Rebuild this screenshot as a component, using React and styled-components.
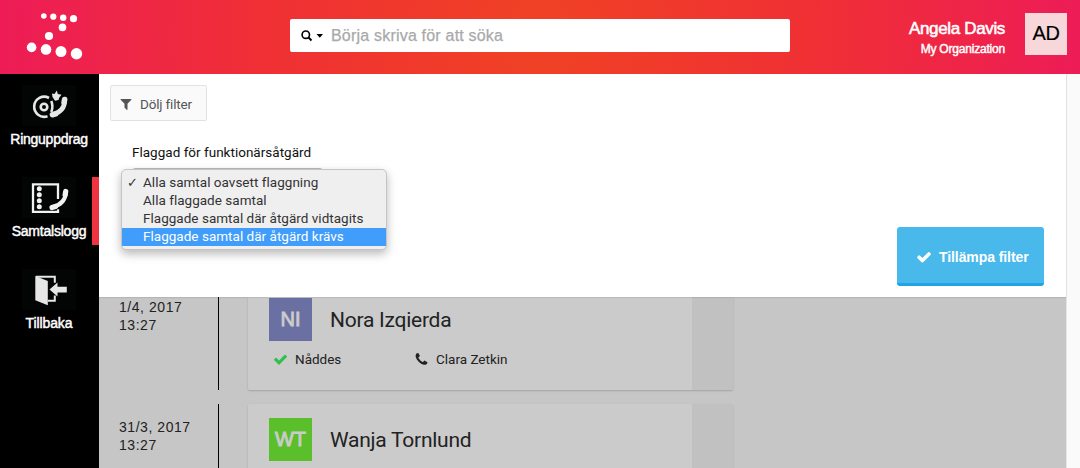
import React from "react";
import styled, { createGlobalStyle } from "styled-components";

const Global = createGlobalStyle`
  * { box-sizing: border-box; }
  body { margin: 0; overflow: hidden; background: #fafafa; font-family: "Liberation Sans", Arial, sans-serif; }
`;

const Page = styled.div`
  width: 1080px; height: 468px; overflow: hidden;
  display: flex; flex-direction: column;
`;
const Header = styled.header`
  flex: 0 0 74px; height: 74px; display: flex; align-items: flex-start;
  background: radial-gradient(circle at 540px 37px, #f04224 0, #f03034 270px, #ed1c57 540px);
`;
const LogoSlot = styled.div`width: 290px; padding: 10px 0 0 24px;`;
const Search = styled.div`
  width: 500px; height: 33px; margin-top: 19px; padding-left: 11px;
  display: flex; align-items: center; background: #fff; border-radius: 2px;
`;
const Placeholder = styled.span`
  margin-left: 8px; font-size: 16px; line-height: 32px; color: #a9a9a9; white-space: nowrap;
  letter-spacing: 0.2px; -webkit-text-stroke: 0.25px #a9a9a9;
`;
const User = styled.div`
  flex: 1; display: flex; justify-content: flex-end; padding: 13px 13px 0 0;
`;
const UserText = styled.div`
  display: flex; flex-direction: column; align-items: flex-end; margin-right: 20px; padding-top: 5px; color: #fff;
`;
const UserName = styled.div`font-size: 17px; line-height: 22px; letter-spacing: -0.35px; -webkit-text-stroke: 0.55px #fff;`;
const Org = styled.div`font-size: 12px; line-height: 18px; letter-spacing: -0.2px; -webkit-text-stroke: 0.45px #fff;`;
const UserBadge = styled.div`
  width: 42px; height: 42px; background: #f8d7da; color: #000; font-size: 20px; line-height: 41px; text-align: center;
  letter-spacing: -0.5px; -webkit-text-stroke: 0.15px #000;
`;
const Body = styled.div`flex: 1; display: flex; min-height: 0;`;
const Sidebar = styled.nav`width: 99px; background: #000; display: flex; flex-direction: column; padding-top: 11px;`;
const NavItem = styled.a`
  height: 68px; margin-bottom: 24px;
  display: flex; flex-direction: column; align-items: center; color: #fff;
  padding-right: ${(p) => (p.$active ? 0 : 1)}px;
  border-right: ${(p) => (p.$active ? "7px solid #ef3340" : "0")};
  padding-left: ${(p) => (p.$active ? 6 : 0)}px;
`;
const NavIcon = styled.svg`width: 54px; height: 41px; flex: none; background: #030505; display: block;`;
const NavLabel = styled.span`
  margin-top: 4px; font-size: 14px; line-height: 18px; white-space: nowrap;
  letter-spacing: ${(p) => p.$ls || 0}px; -webkit-text-stroke: 0.45px #fff;
`;
const Content = styled.main`width: 967px; display: flex; flex-direction: column; background: #c6c6c6;`;
const Gutter = styled.div`width: 14px; background: #fafafa; border-left: 1px solid #e5e5e5;`;
const FilterPanel = styled.section`
  flex: 0 0 223px; height: 223px; background: #fff; padding: 11px 22px 11px 11px;
  display: flex; flex-direction: column; align-items: flex-start; position: relative; z-index: 1;
  box-shadow: 0 1px 1px rgba(0,0,0,.08);
`;
const Glyph = styled.svg`flex: none; display: block; fill: currentColor;`;
const HideButton = styled.button`
  width: 97px; height: 36px; padding: 1px 0 0 8px; display: flex; align-items: center; gap: 7px;
  border: 1px solid #e2e2e2; border-radius: 2px; background: #fafafa; color: #555;
  font: 13.5px/34px Roboto, sans-serif; letter-spacing: -0.18px; white-space: nowrap;
`;
const Field = styled.div`
  position: relative; margin: 21px 0 0 22px; font: 13.5px/20px Roboto, sans-serif; color: #111;
`;
const FieldLabel = styled.div`letter-spacing: 0.01px; white-space: nowrap;`;
const Select = styled.div`width: 191px; height: 22px; margin-top: 6px; border: 1px solid #bbb; border-radius: 3px;`;
const Menu = styled.ul`
  position: absolute; left: -11px; top: 27px; width: 266px; height: 81px; margin: 0; padding: 4px 0 0;
  list-style: none; background: #efefef; border: 1px solid #c4c4c4; border-radius: 5px;
  box-shadow: 0 4px 10px rgba(0,0,0,.28);
`;
const Option = styled.li`
  height: 18px; line-height: 16px; display: flex; font-size: 13.5px; white-space: nowrap;
  color: ${(p) => (p.$selected ? "#fff" : "#333")};
  background: ${(p) => (p.$selected ? "#409dfc" : "transparent")};
  letter-spacing: 0.02px;
`;
const Tick = styled.span`width: 21px; padding-left: 5px; font: bold 13px/17px "DejaVu Sans", sans-serif; letter-spacing: 0;`;
const Apply = styled.button`
  width: 147px; height: 59px; margin: auto 0 0 auto; padding: 3px 0 0 19px; display: flex; align-items: center; gap: 7px;
  border: 0; border-bottom: 3px solid #1fa5e6; border-radius: 3px; background: #49b9ec; color: #fff;
  font: bold 14px "Liberation Sans", Arial, sans-serif; letter-spacing: -0.08px; white-space: nowrap;
`;
const Log = styled.section`flex: 1; min-height: 0; overflow: hidden; display: flex; flex-direction: column; gap: 14px;`;
const Entry = styled.article`flex: none; height: ${(p) => p.$h}px; display: flex;`;
const Time = styled.time`
  width: 120px; padding: ${(p) => p.$top}px 0 0 20px; border-right: 1px solid #000;
  font-size: 14px; line-height: 18px; letter-spacing: 0.55px; color: #222; white-space: nowrap;
`;
const Card = styled.div`
  width: 485px; margin-left: 29px; padding: ${(p) => p.$top}px 0 0 21px;
  background: linear-gradient(to right, #cbcbcb 444px, #c1c1c1 444px);
  border-radius: ${(p) => (p.$cut ? "0 0 2px 2px" : "2px")};
  box-shadow: 0 1px 2px rgba(0,0,0,.18);
`;
const Person = styled.div`display: flex; align-items: center;`;
const Initials = styled.div`
  width: 43px; height: 43px; margin-right: 18px; background: ${(p) => p.$bg};
  color: #cbcbcb; font-size: 20px; line-height: 42px; text-align: center; -webkit-text-stroke: 0.9px #cbcbcb;
`;
const PersonName = styled.div`
  font: 21px/26px Roboto, sans-serif; color: #222; letter-spacing: -0.25px; padding-top: 1px;
`;
const Meta = styled.div`
  display: flex; margin-top: 8px; padding-left: 4px; font: 13.5px/20px Roboto, sans-serif; color: #222;
`;
const MetaItem = styled.div`display: flex; align-items: center; gap: 7px; width: ${(p) => p.$w || "auto"}; white-space: nowrap;`;
const Green = styled.span`color: #2fc14b;`;

const dots = [
  [19.8, 6, 2.8], [29.3, 6.7, 3.1], [39.2, 7.8, 3.2], [49.5, 8.7, 3.6],
  [38.5, 17.4, 3.8], [25, 26, 4.1], [7.6, 37.4, 4.8], [22, 39.4, 5.3], [37, 41.6, 5.5], [52.5, 43.7, 5.7],
];

const Logo = () => (
  <svg width="60" height="52" viewBox="0 0 60 52" fill="#fff">
    {dots.map(([x, y, r]) => <circle key={x} cx={x} cy={y} r={r} />)}
  </svg>
);

const Check = ({ size }) => (
  <Glyph width={size} height={size} viewBox="0 0 1792 1792">
    <path d="M1671 566q0 40-28 68l-724 724-136 136q-28 28-68 28t-68-28l-136-136-362-362q-28-28-28-68t28-68l136-136q28-28 68-28t68 28l294 295 656-657q28-28 68-28t68 28l136 136q28 28 28 68z" />
  </Glyph>
);
const Funnel = ({ size }) => (
  <Glyph width={size} height={size} viewBox="0 0 1792 1792">
    <path d="M1595 295q17 41-14 70l-493 493v742q0 42-39 59-13 5-25 5-27 0-45-19l-256-256q-19-19-19-45v-486l-493-493q-31-29-14-70 17-39 59-39h1280q42 0 59 39z" />
  </Glyph>
);
const Phone = ({ size }) => (
  <Glyph width={size} height={size} viewBox="0 0 1792 1792">
    <path d="M1600 1240q0 27-10 70.5t-21 68.5q-21 50-122 106-94 51-186 51-27 0-53-3.5t-57.5-12.5-47-14.5-55.5-20.5-49-18q-98-35-175-83-127-79-264-216t-216-264q-48-77-83-175-3-9-18-49t-20.5-55.5-14.5-47-12.5-57.5-3.5-53q0-92 51-186 56-101 106-122 25-11 68.5-21t70.5-10q14 0 21 3 18 6 53 76 11 19 30 54t35 63.5 31 53.500q3 4 17.500 25t21.500 35.500 7 28.500q0 20-28.500 50t-62 55-62 53-28.500 46q0 9 5 22.500t8.500 20.500 14 24 11.500 19q76 137 174 235t235 174q2 1 19 11.500t24 14 20.500 8.500 22.500 5q18 0 46-28.500t53-62 55-62 50-28.500q14 0 28.500 7t35.500 21.500 25 17.500q25 15 53.500 31t63.500 35 54 30q70 35 76 53 3 7 3 21z" />
  </Glyph>
);

const RingIcon = () => (
  <NavIcon viewBox="0 0 54 41" fill="none" stroke="#e6e6e6" strokeLinecap="round">
    <path d="M25.500 31.200A10 10 0 1 1 27 13" strokeWidth="2.600" strokeLinecap="butt" />
    <circle cx="22" cy="22" r="3.300" strokeWidth="2.600" />
    <path d="M29.300 16q2.200 5.500 0 11" strokeWidth="2.600" strokeLinecap="butt" />
    <path d="M42.700 15.500q-.2 10.500-11.500 14" strokeWidth="4.800" />
    <path d="M42.600 14.500l-.5 3M30.500 29.700l3-.8" strokeWidth="5.600" />
    <path d="M30.500 12l-.5-3.500 2.500.5 2.300-3.500 1 3.500 3.700.7-2.300 3-.7 2.300-3.500.8z" fill="#e6e6e6" stroke="none" />
  </NavIcon>
);
const LogIcon = () => (
  <NavIcon viewBox="0 0 54 41" fill="#f2f2f2">
    <path d="M36 22V7.300H11v27.500h25v-2.500" fill="none" stroke="#f2f2f2" strokeWidth="2.300" />
    {[11.700, 17.700, 23.700, 29.700].map((y) => <circle key={y} cx="17.300" cy={y} r="2.500" />)}
    <path d="M44 15q-.8 12-13.500 15.200" fill="none" stroke="#030505" strokeWidth="7" />
    <path d="M44 15q-.8 12-13.500 15.200" fill="none" stroke="#f2f2f2" strokeWidth="4" strokeLinecap="round" />
    <path d="M43.700 14.500l-.6 3.500M30 30.500l3.500-1" fill="none" stroke="#f2f2f2" strokeWidth="5.200" strokeLinecap="round" />
  </NavIcon>
);
const BackIcon = () => (
  <NavIcon viewBox="0 0 54 41" fill="#e6e6e6">
    <path d="M14 7.800h18.800v6M32.800 26.500v5.200h-7" fill="none" stroke="#e6e6e6" strokeWidth="2" />
    <path d="M13.300 7l12.500 5v24.300l-12.500-5z" />
    <path d="M27.500 20.500l8-6.900v4.200h9.300v5.600h-9.300v4.200z" />
  </NavIcon>
);

export default function App() {
  return (
    <Page>
      <Global />
      <Header>
        <LogoSlot><Logo /></LogoSlot>
        <Search>
          <svg width="22" height="14" viewBox="0 0 22 14">
            <circle cx="4.800" cy="5.700" r="3.700" fill="none" stroke="#000" strokeWidth="1.600" />
            <path d="M7.500 8.500l3 3" stroke="#000" strokeWidth="1.900" />
            <path d="M15.500 5h6.500l-3.200 3.800z" />
          </svg>
          <Placeholder>Börja skriva för att söka</Placeholder>
        </Search>
        <User>
          <UserText><UserName>Angela Davis</UserName><Org>My Organization</Org></UserText>
          <UserBadge>AD</UserBadge>
        </User>
      </Header>
      <Body>
        <Sidebar>
          <NavItem><RingIcon /><NavLabel $ls={-0.25}>Ringuppdrag</NavLabel></NavItem>
          <NavItem $active><LogIcon /><NavLabel $ls={-0.22}>Samtalslogg</NavLabel></NavItem>
          <NavItem><BackIcon /><NavLabel $ls={-0.1}>Tillbaka</NavLabel></NavItem>
        </Sidebar>
        <Content>
          <FilterPanel>
            <HideButton><Funnel size={14} /> Dölj filter</HideButton>
            <Field>
              <FieldLabel>Flaggad för funktionärsåtgärd</FieldLabel>
              <Select />
              <Menu>
                <Option><Tick>✓</Tick>Alla samtal oavsett flaggning</Option>
                <Option><Tick />Alla flaggade samtal</Option>
                <Option><Tick />Flaggade samtal där åtgärd vidtagits</Option>
                <Option $selected><Tick />Flaggade samtal där åtgärd krävs</Option>
              </Menu>
            </Field>
            <Apply><Check size={16} /> Tillämpa filter</Apply>
          </FilterPanel>
          <Log>
            <Entry $h={93}>
              <Time $top={1}>1/4, 2017<br />13:27</Time>
              <Card $top={1} $cut>
                <Person><Initials $bg="#6b70a3">NI</Initials><PersonName>Nora Izqierda</PersonName></Person>
                <Meta>
                  <MetaItem $w="141px"><Green><Check size={15} /></Green> Nåddes</MetaItem>
                  <MetaItem><Phone size={15} /> Clara Zetkin</MetaItem>
                </Meta>
              </Card>
            </Entry>
            <Entry $h={107}>
              <Time $top={14}>31/3, 2017<br />13:27</Time>
              <Card $top={14}>
                <Person><Initials $bg="#5bbf2b">WT</Initials><PersonName>Wanja Tornlund</PersonName></Person>
              </Card>
            </Entry>
          </Log>
        </Content>
        <Gutter />
      </Body>
    </Page>
  );
}
